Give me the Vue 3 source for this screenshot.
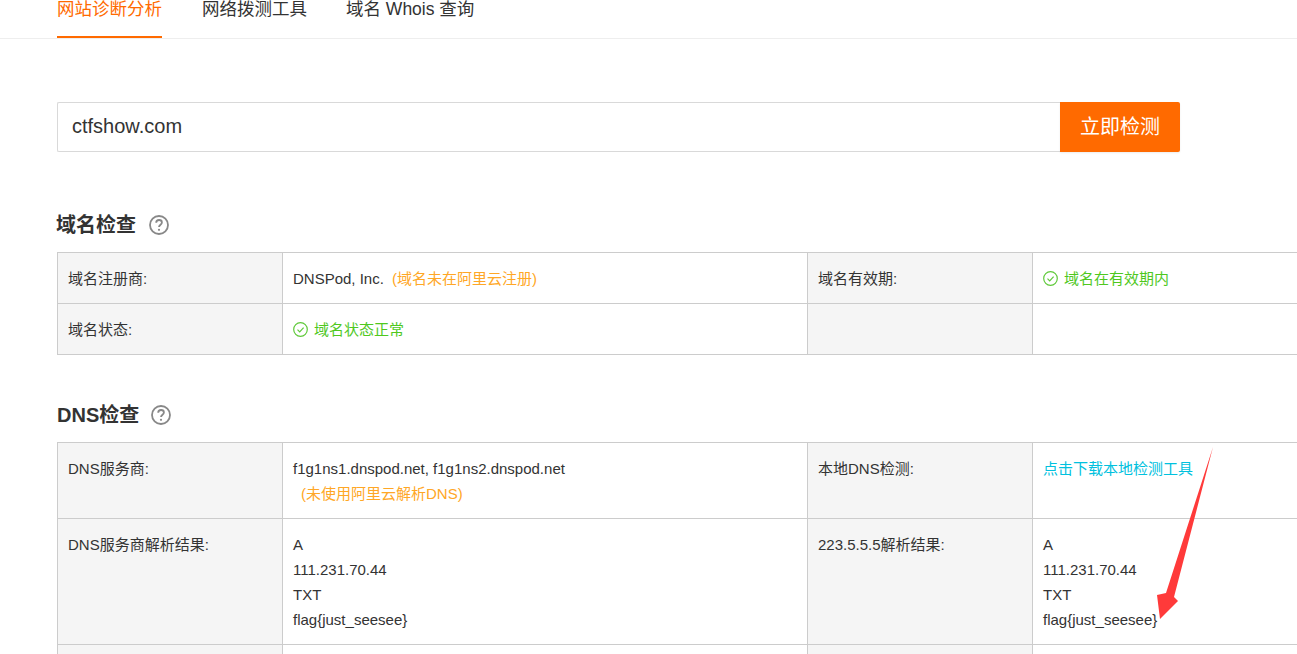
<script setup>
</script>

<template>
  <div class="page">
    <nav class="tabs">
      <a class="tab active">网站诊断分析</a>
      <a class="tab">网络拨测工具</a>
      <a class="tab third">域名 Whois 查询</a>
    </nav>

    <main class="content">
      <div class="search">
        <div class="input">ctfshow.com</div>
        <button class="btn">立即检测</button>
      </div>

      <h2 class="title first">
        域名检查
        <svg class="help" viewBox="0 0 20 20"><circle cx="10" cy="10" r="9" /><path d="M7.2 7.8c0-1.7 1.2-2.8 2.9-2.8 1.6 0 2.8 1 2.8 2.4 0 2.300-2.900 2.300-2.900 4.700" /><circle class="dot" cx="10" cy="14.800" r="1.100" /></svg>
      </h2>
      <table class="grid">
        <colgroup><col class="c1" /><col class="c2" /><col class="c1" /><col class="c4" /></colgroup>
        <tbody>
          <tr>
            <td class="label">域名注册商:</td>
            <td>DNSPod, Inc. <span class="warn">(域名未在阿里云注册)</span></td>
            <td class="label">域名有效期:</td>
            <td class="ok">
              <svg class="check" viewBox="0 0 15 15"><circle cx="7.500" cy="7.500" r="6.800" /><path d="M4.500 7.600l2.200 2.200 3.900-4.200" /></svg>域名在有效期内
            </td>
          </tr>
          <tr>
            <td class="label">域名状态:</td>
            <td class="ok">
              <svg class="check" viewBox="0 0 15 15"><circle cx="7.500" cy="7.500" r="6.800" /><path d="M4.500 7.600l2.200 2.200 3.900-4.200" /></svg>域名状态正常
            </td>
            <td class="label"></td>
            <td></td>
          </tr>
        </tbody>
      </table>

      <h2 class="title second">
        DNS检查
        <svg class="help" viewBox="0 0 20 20"><circle cx="10" cy="10" r="9" /><path d="M7.2 7.8c0-1.7 1.2-2.8 2.9-2.8 1.6 0 2.8 1 2.8 2.4 0 2.300-2.900 2.300-2.900 4.700" /><circle class="dot" cx="10" cy="14.800" r="1.100" /></svg>
      </h2>
      <table class="grid">
        <colgroup><col class="c1" /><col class="c2" /><col class="c1" /><col class="c4" /></colgroup>
        <tbody>
          <tr>
            <td class="label">DNS服务商:</td>
            <td>f1g1ns1.dnspod.net, f1g1ns2.dnspod.net<br /><span class="warn indent">(未使用阿里云解析DNS)</span></td>
            <td class="label">本地DNS检测:</td>
            <td class="link">点击下载本地检测工具</td>
          </tr>
          <tr>
            <td class="label">DNS服务商解析结果:</td>
            <td>A<br />111.231.70.44<br />TXT<br />flag{just_seesee}</td>
            <td class="label">223.5.5.5解析结果:</td>
            <td>A<br />111.231.70.44<br />TXT<br />flag{just_seesee}</td>
          </tr>
          <tr>
            <td class="label">&nbsp;</td>
            <td>&nbsp;</td>
            <td class="label">&nbsp;</td>
            <td>&nbsp;</td>
          </tr>
        </tbody>
      </table>
    </main>

    <svg class="arrow" viewBox="0 0 1297 654">
      <polygon points="1213,447 1174,597 1178,601 1160,619 1157,595 1166,593" />
    </svg>
  </div>
</template>

<style>
html, body { margin: 0; overflow: hidden; background: #fff; }
</style>

<style scoped>
.page {
  position: relative;
  width: 1297px;
  height: 654px;
  overflow: hidden;
  color: #333;
  font-family: "Liberation Sans", "Noto Sans CJK SC", sans-serif;
  font-size: 15px;
}
.tabs {
  display: flex;
  gap: 40px;
  height: 38px;
  padding-left: 57px;
  border-bottom: 1px solid #eee;
  box-sizing: content-box;
}
.tab {
  height: 38px;
  box-sizing: border-box;
  font-size: 17.500px;
  line-height: 18px;
  border-bottom: 2px solid transparent;
  color: #333;
}
.tab.third { margin-left: -1px; }
.tab.active { color: #ff6a00; border-bottom-color: #ff6a00; }
.content { padding-left: 57px; }
.search {
  display: flex;
  width: 1123px;
  height: 50px;
  margin-top: 63px;
}
.input {
  flex: 1;
  box-sizing: border-box;
  border: 1px solid #d9d9d9;
  border-right: 0;
  border-radius: 2px 0 0 2px;
  padding-left: 14px;
  font-size: 20px;
  line-height: 47px;
  color: #333;
}
.btn {
  width: 120px;
  border: 0;
  padding: 0 0 3px;
  border-radius: 0 2px 2px 0;
  background: #ff6a00;
  color: #fff;
  font-family: inherit;
  font-size: 20px;
  box-shadow: 0 1px 2px rgba(0, 0, 0, 0.08);
}
.title {
  display: flex;
  align-items: center;
  gap: 13px;
  height: 26px;
  margin: 0 0 14px -1px;
  font-size: 20px;
  font-weight: 700;
  line-height: 26px;
  color: #333;
}
.title.first { margin-top: 60px; }
.title.second { margin-top: 47px; margin-left: 0; gap: 12px; }
.help { width: 20px; height: 20px; flex: none; fill: none; stroke: #888; stroke-width: 1.800; }
.help .dot { fill: #888; stroke: none; }
.grid {
  width: 1300px;
  table-layout: fixed;
  border-collapse: separate;
  border-spacing: 0;
  border-bottom: 1px solid #ccc;
  line-height: 25px;
}
.c1 { width: 225px; }
.c2 { width: 525px; }
.c4 { width: 325px; }
.grid td {
  box-sizing: border-box;
  padding: 13px 10px 12px;
  border-top: 1px solid #ccc;
  border-left: 1px solid #ccc;
  vertical-align: top;
}
.grid td.label { background: #f5f5f5; }
.warn { color: #ffa726; margin-left: 4px; }
.warn.indent { margin-left: 8px; }
.grid td.ok { color: #4fc81e; }
.grid td.link { color: #00c1de; }
.check {
  width: 15px;
  height: 15px;
  margin-right: 6px;
  vertical-align: -2px;
  fill: none;
  stroke: #5fc93a;
  stroke-width: 1.200;
}
.arrow {
  position: absolute;
  inset: 0;
  width: 1297px;
  height: 654px;
  fill: #ff3a3a;
  pointer-events: none;
}
</style>
